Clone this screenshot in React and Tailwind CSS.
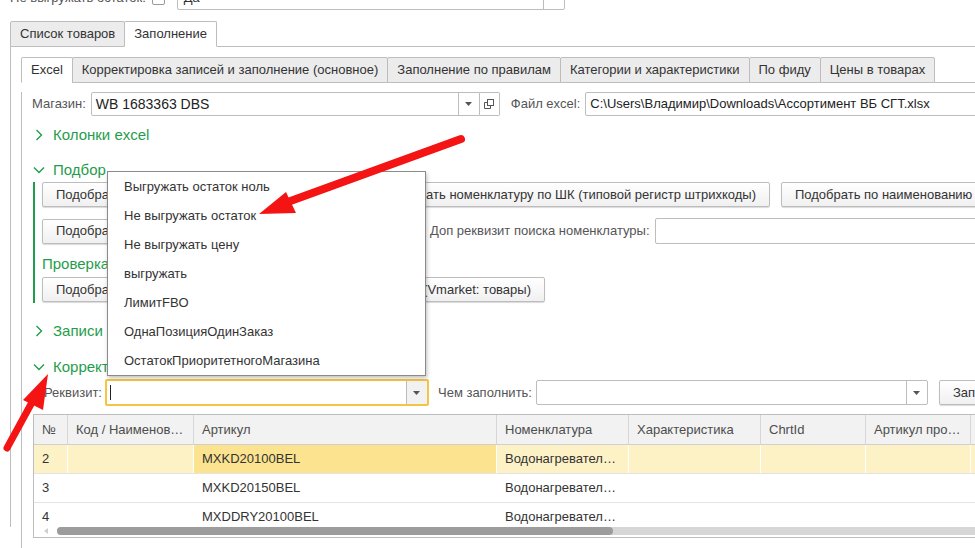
import React from 'react';

const green = 'text-[#1f9d4c]';

const Chevron = ({ open }) => (
    <span className="w-[12px] h-[20px] flex items-center justify-center shrink-0">
        {open ? (
            <svg width="12" height="8" viewBox="0 0 12 8">
                <polyline points="1,1.5 6,6.5 11,1.5" fill="none" stroke="#1f9d4c" strokeWidth="1.4" />
            </svg>
        ) : (
            <svg width="8" height="12" viewBox="0 0 8 12">
                <polyline points="1.5,1 6.5,6 1.5,11" fill="none" stroke="#1f9d4c" strokeWidth="1.4" />
            </svg>
        )}
    </span>
);

const GroupTitle = ({ open, children, className = '' }) => (
    <div className={`flex items-center h-[20px] gap-[8px] ml-[1px] text-[15px] ${green} ${className}`}>
        <Chevron open={open} />
        <span>{children}</span>
    </div>
);

const Btn = ({ children, className = '' }) => (
    <div className={`h-[25px] shrink-0 flex items-center px-[13px] border border-[#bdbdbd] rounded-[2px] bg-gradient-to-b from-white to-[#f0f0f0] shadow-[0_1px_1px_rgba(0,0,0,0.15)] text-[#333] whitespace-nowrap overflow-hidden ${className}`}>
        {children}
    </div>
);

const DropArrow = () => (
    <span className="w-[21px] h-full border-l border-[#bdbdbd] flex items-center justify-center shrink-0">
        <svg width="7" height="4" viewBox="0 0 7 4"><polygon points="0,0 7,0 3.5,4" fill="#555" /></svg>
    </span>
);

const Tab = ({ active, children }) => (
    <div className={`h-[26px] px-[9px] flex items-center border border-[#bdbdbd] rounded-t-[2px] whitespace-nowrap shrink-0 -ml-px first:ml-0 ${active ? 'bg-white border-b-white' : 'bg-[#ececec]'}`}>
        {children}
    </div>
);

const menuItems = [
    'Выгружать остаток ноль',
    'Не выгружать остаток',
    'Не выгружать цену',
    'выгружать',
    'ЛимитFBO',
    'ОднаПозицияОдинЗаказ',
    'ОстатокПриоритетногоМагазина',
];

const columns = [
    { title: '№', w: 'w-[34px]' },
    { title: 'Код / Наименов…', w: 'w-[126px]' },
    { title: 'Артикул', w: 'w-[303px]' },
    { title: 'Номенклатура', w: 'w-[132px]' },
    { title: 'Характеристика', w: 'w-[132px]' },
    { title: 'ChrtId', w: 'w-[105px]' },
    { title: 'Артикул про…', w: 'w-[105px]' },
    { title: '', w: 'w-[60px]' },
];

const rows = [
    ['2', '', 'MXKD20100BEL', 'Водонагревател…'],
    ['3', '', 'MXKD20150BEL', 'Водонагревател…'],
    ['4', '', 'MXDDRY20100BEL', 'Водонагревател…'],
];

export default function App() {
    return (
        <div className="w-[975px] h-[548px] overflow-hidden bg-white relative font-['Liberation_Sans',Arial,sans-serif] text-[13px] text-[#333]">
            {/* top row, cut off */}
            <div className="flex items-center h-[24px] -mt-[14px] pl-[10px]">
                <span className="text-[#555] whitespace-nowrap">Не выгружать остаток:</span>
                <span className="ml-[6px] w-[13px] h-[13px] border border-[#999] rounded-[2px] bg-white shrink-0" />
                <div className="ml-[12px] w-[388px] h-[24px] border border-[#bdbdbd] rounded-[2px] flex items-center shrink-0">
                    <span className="flex-1 px-[6px]">Да</span>
                    <span className="w-[21px] h-full border-l border-[#bdbdbd]" />
                </div>
            </div>

            {/* outer tabs */}
            <div className="flex items-end mt-[10px] ml-[10px] h-[27px]">
                <Tab>Список товаров</Tab>
                <Tab active>Заполнение</Tab>
                <div className="flex-1 border-b border-[#bdbdbd]" />
            </div>

            <div className="ml-[10px] border-l border-[#bdbdbd] h-[480px] pl-[10px] pt-[9px]">
                {/* inner tabs */}
                <div className="flex items-end h-[27px]">
                    <Tab active>Excel</Tab>
                    <Tab>Корректировка записей и заполнение (основное)</Tab>
                    <Tab>Заполнение по правилам</Tab>
                    <Tab>Категории и характеристики</Tab>
                    <Tab>По фиду</Tab>
                    <Tab>Цены в товарах</Tab>
                    <div className="flex-1 border-b border-[#bdbdbd]" />
                </div>

                <div className="border-l border-[#bdbdbd] h-[460px] pl-[10px]">
                    {/* Магазин / Файл */}
                    <div className="flex items-center h-[24px] mt-[9px] whitespace-nowrap">
                        <span className="text-[#555]">Магазин:</span>
                        <div className="ml-[5px] w-[389px] h-[24px] border border-[#bdbdbd] rounded-l-[2px] flex items-center shrink-0">
                            <span className="flex-1 px-[4px] text-[14px] text-[#222]">WB 1683363 DBS</span>
                            <DropArrow />
                        </div>
                        <div className="w-[20px] h-[24px] border border-l-0 border-[#bdbdbd] rounded-r-[2px] flex items-center justify-center shrink-0">
                            <svg width="10" height="10" viewBox="0 0 10 10" fill="none" stroke="#555" strokeWidth="1">
                                <rect x="3.5" y="0.5" width="6" height="6" />
                                <polyline points="3.5,3.5 0.5,3.5 0.5,9.5 6.5,9.5 6.5,6.5" />
                            </svg>
                        </div>
                        <span className="ml-[11px] text-[#555]">Файл excel:</span>
                        <div className="ml-[5px] w-[420px] h-[24px] border border-[#bdbdbd] rounded-[2px] flex items-center px-[4px] shrink-0 text-[#222]">
                            C:\Users\Владимир\Downloads\Ассортимент ВБ СГТ.xlsx
                        </div>
                    </div>

                    <GroupTitle className="mt-[9px]">Колонки excel</GroupTitle>
                    <GroupTitle open className="mt-[15px]">Подбор номенклатуры</GroupTitle>

                    <div className="mt-[2px] ml-[1px] border-l-2 border-[#1f9d4c] pl-[7px] pb-[1px]">
                        <div className="flex items-center mt-[2px] gap-[10px]">
                            <Btn className="w-[322px]">Подобрать номенклатуру по артикулу</Btn>
                            <Btn className="w-[396px] justify-end">Подобрать номенклатуру по ШК (типовой регистр штрихкоды)</Btn>
                            <Btn className="ml-[1px]">Подобрать по наименованию</Btn>
                        </div>
                        <div className="flex items-center mt-[11px] h-[26px] whitespace-nowrap">
                            <Btn className="w-[378px]">Подобрать номенклатуру по доп реквизиту</Btn>
                            <span className="ml-[10px] text-[#555]">Доп реквизит поиска номенклатуры:</span>
                            <div className="ml-[5px] w-[340px] h-[26px] border border-[#bdbdbd] rounded-[2px] shrink-0" />
                        </div>
                        <div className={`mt-[10px] h-[20px] flex items-center text-[15px] ${green}`}>Проверка номенклатуры</div>
                        <div className="flex items-center mt-[3px]">
                            <Btn className="w-[503px] justify-between">
                                <span>Подобрать номенклатуру</span>
                                <span>по артикулу продавца (Vmarket: товары)</span>
                            </Btn>
                        </div>
                    </div>

                    <GroupTitle className="mt-[18px]">Записи</GroupTitle>
                    <GroupTitle open className="mt-[16px]">Корректировка</GroupTitle>

                    {/* Реквизит row */}
                    <div className="flex items-center h-[27px] mt-[2px] ml-[12px] whitespace-nowrap">
                        <span className="text-[#555]">Реквизит:</span>
                        <div className="ml-[3px] w-[324px] h-[27px] border-2 border-[#f6c443] rounded-[2px] flex items-center shrink-0">
                            <span className="flex-1 pl-[3px] flex items-center">
                                <span className="w-px h-[15px] bg-[#222]" />
                            </span>
                            <span className="w-[21px] h-full border-l border-[#bdbdbd] bg-[#f2f2f2] flex items-center justify-center">
                                <svg width="7" height="4" viewBox="0 0 7 4"><polygon points="0,0 7,0 3.5,4" fill="#555" /></svg>
                            </span>
                        </div>
                        <span className="ml-[9px] text-[#555]">Чем заполнить:</span>
                        <div className="ml-[4px] w-[392px] h-[25px] border border-[#bdbdbd] rounded-[2px] flex items-center shrink-0">
                            <span className="flex-1" />
                            <DropArrow />
                        </div>
                        <Btn className="ml-[11px]">Заполнить</Btn>
                    </div>

                    {/* table */}
                    <div className="mt-[8px] ml-[1px] w-[960px] border border-[#bdbdbd]">
                        <div className="flex h-[30px] bg-[#f2f2f2] border-b border-[#d0d0d0] text-[#4d4d4d]">
                            {columns.map((c, i) => (
                                <div key={i} className={`${c.w} shrink-0 h-full flex items-center px-[8px] border-r border-[#d6d6d6] whitespace-nowrap overflow-hidden`}>
                                    {c.title}
                                </div>
                            ))}
                        </div>
                        <div className="h-[80px] overflow-hidden">
                            {rows.map((r, ri) => (
                                <div key={ri} className={`flex h-[29px] border-b border-[#e4e4e4] ${ri === 0 ? 'bg-[#fdf2c6]' : 'bg-white'}`}>
                                    {columns.map((c, ci) => (
                                        <div
                                            key={ci}
                                            className={`${c.w} shrink-0 h-full flex items-center px-[8px] whitespace-nowrap overflow-hidden ${ri === 0 ? 'border-r border-white' : ''} ${ri === 0 && ci === 2 ? 'bg-[#fbe38f]' : ''}`}
                                        >
                                            {r[ci] || ''}
                                        </div>
                                    ))}
                                </div>
                            ))}
                        </div>
                        <div className="h-[12px] flex items-center">
                            <span className="w-[23px] flex justify-center">
                                <svg width="4" height="6" viewBox="0 0 4 6"><polygon points="4,0 4,6 0,3" fill="#cfcfcf" /></svg>
                            </span>
                            <div className="flex-1 h-[8px] bg-[#d6d6d6] rounded-l-full flex">
                                <div className="w-[556px] h-full bg-[#9c9c9c] rounded-full" />
                            </div>
                        </div>
                    </div>
                </div>
            </div>

            {/* dropdown menu */}
            <div className="absolute left-[107px] top-[171px] w-[319px] bg-white border border-[#8a8a8a] shadow-[0_-10px_0_0_#fff,1px_2px_4px_rgba(0,0,0,0.25)]">
                {menuItems.map((m) => (
                    <div key={m} className="h-[29px] flex items-center pl-[16px] text-[#333] whitespace-nowrap">
                        {m}
                    </div>
                ))}
            </div>

            {/* red arrows */}
            <svg className="absolute left-0 top-0 pointer-events-none" width="975" height="548">
                <line x1="461" y1="139" x2="285" y2="203" stroke="#f41414" strokeWidth="8" strokeLinecap="round" />
                <polygon points="259,214 286,192 296,213" fill="#f41414" />
                <line x1="7" y1="448" x2="36" y2="395" stroke="#f41414" strokeWidth="7" strokeLinecap="round" />
                <polygon points="48,374 23,400 43,410" fill="#f41414" />
            </svg>
        </div>
    );
}
